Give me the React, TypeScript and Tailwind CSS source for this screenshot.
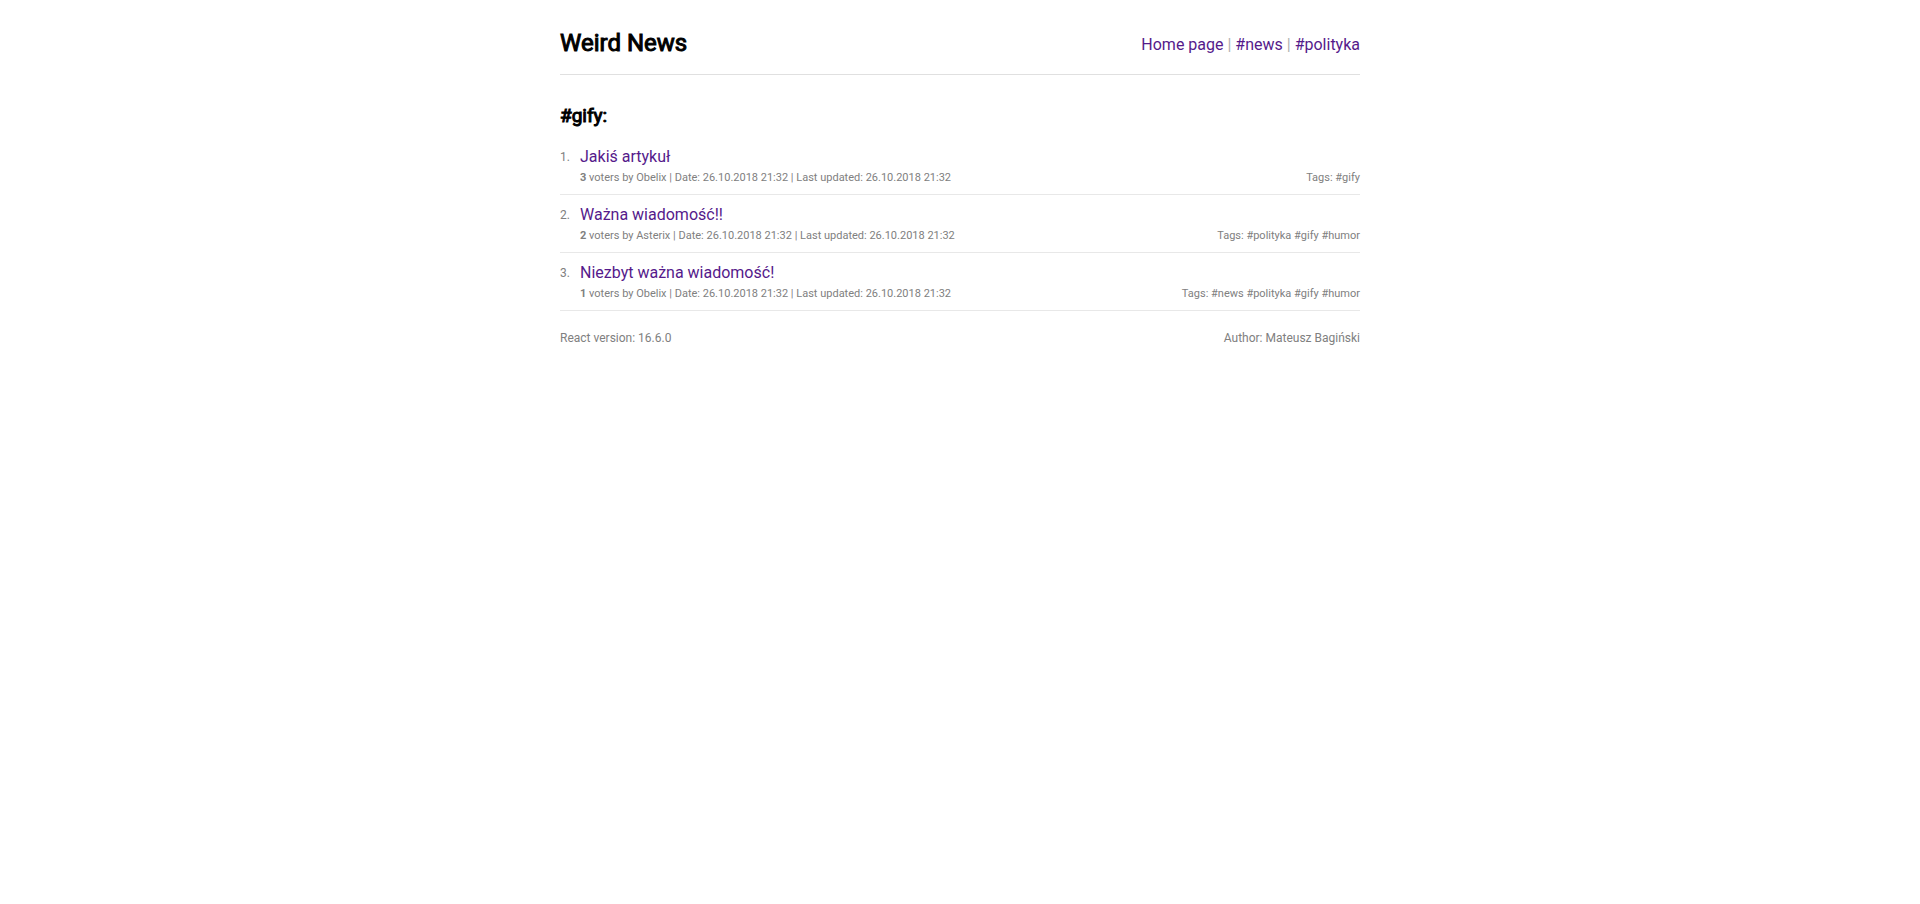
const nav = ["Home page", "#news", "#polityka"];

const articles = [
  { title: "Jakiś artykuł", votes: 3, author: "Obelix", tags: ["#gify"] },
  { title: "Ważna wiadomość!!", votes: 2, author: "Asterix", tags: ["#polityka", "#gify", "#humor"] },
  { title: "Niezbyt ważna wiadomość!", votes: 1, author: "Obelix", tags: ["#news", "#polityka", "#gify", "#humor"] },
];

const date = "26.10.2018 21:32";

export default function App() {
  return (
    <div className="mx-auto max-w-[800px] font-['Roboto',sans-serif] text-black">
      <header className="flex items-end justify-between border-b border-[#e0e0e0] pt-7 pb-4">
        <h1 className="text-2xl leading-[30px] font-normal [-webkit-text-stroke:1px_black]">Weird News</h1>
        <nav className="text-base leading-[26px] text-[#b0b0b0]">
          {nav.map((label, i) => (
            <span key={label}>
              {i > 0 && " | "}
              <a href="#" className="text-[#551a8b]">{label}</a>
            </span>
          ))}
        </nav>
      </header>
      <main>
        <h2 className="mt-7 mb-4 text-[19px] leading-[26px] font-normal [-webkit-text-stroke:1px_black]">#gify:</h2>
        <ol>
          {articles.map((a, i) => (
            <li key={a.title} className="mb-2 flex border-b border-[#e8e8e8] pb-2 text-[11px] text-[#808080]">
              <span className="w-5 shrink-0 text-xs leading-6">{i + 1}.</span>
              <div className="grow">
                <a href="#" className="block text-base leading-6 text-[#551a8b]">{a.title}</a>
                <div className="flex justify-between leading-[17px]">
                  <p>
                    <b>{a.votes}</b> voters by {a.author} | Date: {date} | Last updated: {date}
                  </p>
                  <p>Tags: {a.tags.join(" ")}</p>
                </div>
              </div>
            </li>
          ))}
        </ol>
      </main>
      <footer className="flex justify-between pt-3 text-xs leading-[14px] text-[#808080]">
        <p>React version: 16.6.0</p>
        <p>Author: Mateusz Bagiński</p>
      </footer>
    </div>
  );
}
